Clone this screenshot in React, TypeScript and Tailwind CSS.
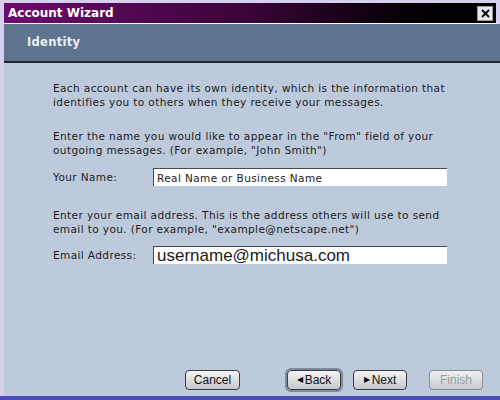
export default function App() {
  return (
    <div className="w-[500px] h-[400px] bg-[#d6d0ee] flex flex-col font-['DejaVu_Sans',sans-serif] text-[#1c1c1c] overflow-hidden">
      {/*  Title bar  */}
      <div className="mt-[3px] ml-[4px] mr-[4px] h-[20px] flex items-center justify-between bg-gradient-to-r from-[#6c0a6e] via-[#3a0538] to-[#000000] pl-[4px] pr-[3px]">
        <span className="text-white font-bold text-[12px]">Account Wizard</span>
        <button className="w-[16px] h-[15px] bg-[#e6e6ec] border border-[#9a9a9a] flex items-center justify-center">
          <svg width="9" height="9" viewBox="0 0 9 9">
            <path d="M1 1 L8 8 M8 1 L1 8" stroke="#000" strokeWidth="1.8" />
          </svg>
        </button>
      </div>

      <div className="flex flex-1 ml-[4px] mr-[3px] mb-[4px] border-t border-white">
        <div className="flex-1 flex flex-col bg-[#bccadb] border-r border-white">
          {/*  Header band  */}
          <div className="h-[39px] bg-[#5f748f] border-b-2 border-[#1c2430] flex items-center pl-[23px]">
            <span className="text-[#eef0f4] font-bold text-[11.5px] tracking-[0.3px]">Identity</span>
          </div>

          {/*  Content  */}
          <div className="flex-1 flex flex-col pl-[49px] pr-[20px] pt-[18px] text-[10.5px] leading-[14px] tracking-[0.4px] whitespace-nowrap">
            <p>
              Each account can have its own identity, which is the information that
              <br />
              identifies you to others when they receive your messages.
            </p>

            <p className="mt-[20px]">
              Enter the name you would like to appear in the "From" field of your
              <br />
              outgoing messages. (For example, "John Smith")
            </p>

            <div className="flex items-center mt-[11px]">
              <span className="w-[100px]">Your Name:</span>
              <div className="w-[294px] h-[18px] bg-white border-t border-l border-[#4a4a4a] flex items-center pl-[3px]">
                Real Name or Business Name
              </div>
            </div>

            <p className="mt-[22px]">
              Enter your email address. This is the address others will use to send
              <br />
              email to you. (For example, "example@netscape.net")
            </p>

            <div className="flex items-center mt-[10px]">
              <span className="w-[100px]">Email Address:</span>
              <div className="w-[294px] h-[18px] bg-white border-t border-l border-[#4a4a4a] flex items-center pl-[3px] font-['Liberation_Sans',sans-serif] text-[17px] tracking-normal">
                username@michusa.com
              </div>
            </div>

            {/*  Buttons  */}
            <div className="mt-auto mb-[6px] flex items-center font-['Liberation_Sans',sans-serif] text-[12px] tracking-normal">
              <button className="ml-[132px] w-[55px] h-[20px] rounded-[4px] border border-[#3c3c3c] bg-gradient-to-b from-[#f4f4f4] to-[#c4c8cc] text-[#111]">
                Cancel
              </button>
              <button className="ml-[47px] w-[54px] h-[20px] rounded-[4px] border border-[#3c3c3c] outline outline-2 outline-[#7c8aa0] bg-gradient-to-b from-[#f4f4f4] to-[#c4c8cc] text-[#111] flex items-center justify-center gap-[2px]">
                <span className="text-[8px]">◀</span>Back
              </button>
              <button className="ml-[12px] w-[54px] h-[20px] rounded-[4px] border border-[#3c3c3c] bg-gradient-to-b from-[#f4f4f4] to-[#c4c8cc] text-[#111] flex items-center justify-center gap-[2px]">
                <span className="text-[8px]">▶</span>Next
              </button>
              <button className="ml-[22px] w-[54px] h-[20px] rounded-[4px] border border-[#8c8c8c] bg-gradient-to-b from-[#eef0f2] to-[#c8ccd0] text-[#9a9ea4]">
                Finish
              </button>
            </div>
          </div>
        </div>
      </div>
      <div className="h-[4px] bg-[#4c4cb8] -mt-[4px]"></div>
    </div>
  );
}
